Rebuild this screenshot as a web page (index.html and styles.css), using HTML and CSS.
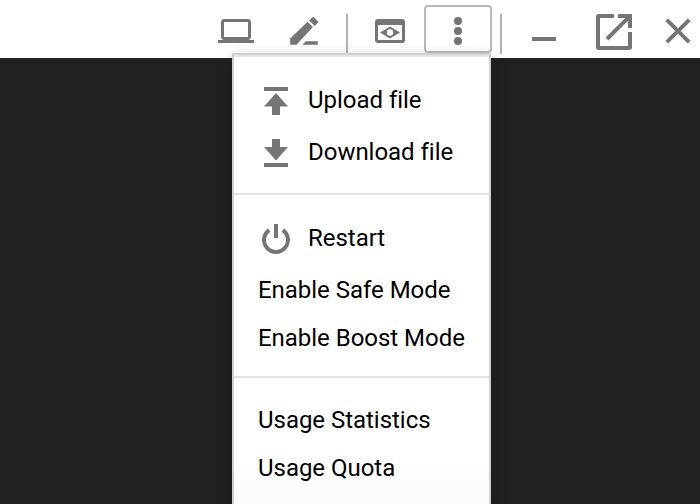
FILE: index.html
```
<!DOCTYPE html>
<html lang="en">
<head>
<meta charset="utf-8">
<title>Cloud Shell</title>
<link rel="stylesheet" href="styles.css">
</head>
<body>
<header class="toolbar">
  <svg class="icon laptop" viewBox="0 0 24 24"><path d="M20 18c1.1 0 1.99-.9 1.99-2L22 6c0-1.100-.9-2-2-2H4c-1.100 0-2 .9-2 2v10c0 1.100.9 2 2 2H0v2h24v-2h-4zM4 6h16v10H4V6z"/></svg>
  <svg class="icon edit" viewBox="0 0 36 36"><path d="M4.200 31.700v-6.300L21.500 8.700l5.400 5.400L10.500 31.700zM23.200 7.400l3-3q1-1 2 0l3.500 3.500q1 1 0 2l-3 3zM19.800 28.300h12v3.400h-15.400z"/></svg>
  <span class="divider first"></span>
  <svg class="icon preview" viewBox="0 0 36 36"><path fill-rule="evenodd" d="M6 6h24a3 3 0 0 1 3 3v18a3 3 0 0 1-3 3H6a3 3 0 0 1-3-3V9a3 3 0 0 1 3-3zM6 12v15h24V12zM8 19.500l10-6 10 6-10 6zM21.200 19.500a3.200 3.200 0 1 0-6.400 0a3.200 3.200 0 1 0 6.400 0z"/></svg>
  <button class="more" aria-label="More"><svg class="dots" viewBox="0 0 8 28"><circle cx="4" cy="4" r="4"/><circle cx="4" cy="14" r="4"/><circle cx="4" cy="24" r="4"/></svg></button>
  <span class="divider second"></span>
  <span class="minimize"></span>
  <svg class="icon open" viewBox="0 0 36 36"><path d="M18 0v4H4v28h28V18h4v15a3 3 0 0 1-3 3H3a3 3 0 0 1-3-3V3a3 3 0 0 1 3-3zM22 0h14v14h-4V6.800L12.400 26.400l-2.800-2.800L29.200 4H22z"/></svg>
  <svg class="close" viewBox="0 0 26 26"><path d="M1.800 1.800l22.400 22.400M24.200 1.800L1.800 24.200"/></svg>
</header>
<nav class="menu">
  <section class="group">
    <div class="item with-icon"><svg class="glyph" viewBox="0 0 28 30"><path d="M2 1h24v4H2zM14 7l12 13.500h-8V29h-8v-8.500H2z"/></svg>Upload file</div>
    <div class="item with-icon"><svg class="glyph" viewBox="0 0 28 30"><path d="M10 1h8v8h8L14 22.500 2 9h8zM2 25h24v4H2z"/></svg>Download file</div>
  </section>
  <section class="group">
    <div class="item with-icon restart"><svg class="glyph" viewBox="0 0 28 30"><path d="M12 0h4v14h-4z"/><path class="ring" d="M7.200 6.100A12 12 0 1 0 20.800 6.100"/></svg>Restart</div>
    <div class="item">Enable Safe Mode</div>
    <div class="item">Enable Boost Mode</div>
  </section>
  <section class="group">
    <div class="item">Usage Statistics</div>
    <div class="item">Usage Quota</div>
  </section>
</nav>
</body>
</html>
```
FILE: styles.css
```
* { box-sizing: border-box; }

body {
  margin: 0;
  height: 504px;
  overflow: hidden;
  background: #212121;
  font-family: Roboto, sans-serif;
  font-size: 24px;
  letter-spacing: -.03px;
  color: #000;
}

.toolbar {
  display: flex;
  align-items: flex-start;
  height: 58px;
  padding-left: 218px;
  background: #fff;
}

svg { display: block; flex: none; fill: #757575; }
.icon { width: 36px; height: 36px; margin-top: 13px; }
.edit { margin-left: 32px; }
.divider { flex: none; width: 2px; height: 40px; margin-top: 14px; background: #b3b3b3; }
.first { margin-left: 24px; }
.preview { margin-left: 24px; }

.more {
  display: flex;
  flex: none;
  justify-content: center;
  width: 68px;
  height: 48px;
  margin: 5px 0 0 16px;
  padding: 10px 0 0;
  border: 2px solid #b8b8b8;
  border-radius: 4px;
  background: #fff;
}
.dots { width: 8px; height: 28px; }
.second { margin-left: 8px; }
.minimize { flex: none; width: 24px; height: 4px; margin: 37px 0 0 30px; background: #757575; }
.open { margin: 14px 0 0 40px; }
.close { width: 26px; height: 26px; margin: 18px 0 0 33px; fill: none; stroke: #757575; stroke-width: 4; }

.menu {
  position: absolute;
  top: 53px;
  left: 232px;
  width: 259px;
  height: 470px;
  border: 2px solid #d0d0d0;
  background: linear-gradient(#fff 405px, #fafafa 455px);
  box-shadow: 0 4px 16px rgba(0, 0, 0, .2);
}

.group { padding: 17px 0 15px; border-top: 2px solid #e5e5e5; }
.group + .group { padding: 17px 0 14px; }
.group:last-child { padding-top: 18px; }
.item { height: 48px; padding-left: 24px; line-height: 48px; white-space: nowrap; }
.with-icon { display: flex; align-items: center; height: 52px; padding-left: 28px; line-height: 52px; }
.restart { margin-bottom: 2px; }
.glyph { width: 28px; height: 30px; margin: 2px 18px 0 0; }
.ring { fill: none; stroke: #757575; stroke-width: 4; }
```
